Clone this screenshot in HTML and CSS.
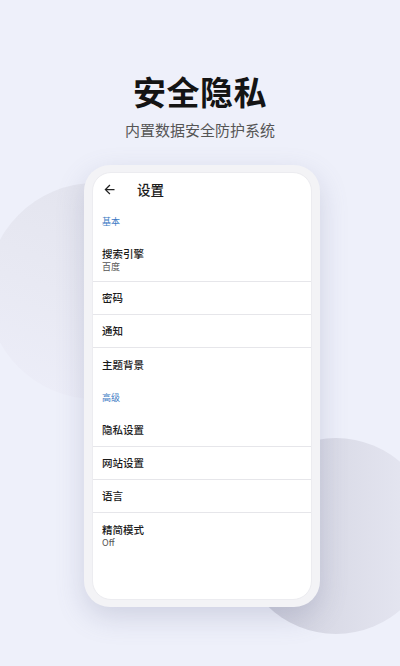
FILE: index.html
```html
<!DOCTYPE html>
<html lang="zh-CN">
<head>
  <meta charset="UTF-8">
  <meta name="viewport" content="width=device-width, initial-scale=1.0">
  <title>安全隐私</title>
  <link rel="stylesheet" href="styles.css">
</head>
<body>
  <div class="page">
    <h1 class="headline">安全隐私</h1>
    <p class="tagline">内置数据安全防护系统</p>

    <div class="phone">
      <div class="screen">
        <div class="app-bar">
          <svg class="back-icon" viewBox="0 0 24 24" width="15" height="15">
            <path d="M20 11H7.83l5.59-5.59L12 4l-8 8 8 8 1.41-1.41L7.83 13H20v-2z" fill="#222"/>
          </svg>
          <span class="app-title">设置</span>
        </div>

        <div class="settings">
          <div class="section-label">基本</div>
          <div class="row two-line">
            <span class="row-title">搜索引擎</span>
            <span class="row-sub">百度</span>
          </div>
          <div class="row"><span class="row-title">密码</span></div>
          <div class="row"><span class="row-title">通知</span></div>
          <div class="row last"><span class="row-title">主题背景</span></div>

          <div class="section-label">高级</div>
          <div class="row"><span class="row-title">隐私设置</span></div>
          <div class="row"><span class="row-title">网站设置</span></div>
          <div class="row"><span class="row-title">语言</span></div>
          <div class="row two-line last">
            <span class="row-title">精简模式</span>
            <span class="row-sub">Off</span>
          </div>
        </div>
      </div>
    </div>
  </div>
</body>
</html>
```

FILE: styles.css
```css
/* Reset */
* {
  margin: 0;
  padding: 0;
  box-sizing: border-box;
}

body {
  font-family: 'Noto Sans CJK SC', 'Noto Sans', sans-serif;
  background-color: #eef0fa;
  width: 400px;
  height: 666px;
  overflow: hidden;
}

/* Page with the two soft circles behind the phone */
.page {
  position: relative;
  height: 666px;
  display: flex;
  flex-direction: column;
  align-items: center;
  padding-top: 71px;
  overflow: hidden;
}

.page::before,
.page::after {
  content: '';
  position: absolute;
  border-radius: 50%;
  z-index: 0;
}

.page::before {
  left: -13px;
  top: 183px;
  width: 216px;
  height: 216px;
  background: linear-gradient(200deg, #e2e3ed 0%, #e8e9f3 55%, #edeef9 100%);
}

.page::after {
  left: 238px;
  top: 438px;
  width: 196px;
  height: 196px;
  background: linear-gradient(90deg, #c8c9d6 0%, #d9dae6 45%, #e8e9f4 100%);
}

/* Heading */
.headline {
  position: relative;
  z-index: 1;
  font-size: 33px;
  line-height: 40px;
  font-weight: 700;
  color: #141414;
  letter-spacing: 0.5px;
}

.tagline {
  position: relative;
  z-index: 1;
  margin-top: 9px;
  font-size: 15px;
  line-height: 20px;
  color: #555;
}

/* Phone frame */
.phone {
  position: relative;
  z-index: 1;
  margin-top: 25px;
  margin-left: 4px;
  width: 236px;
  height: 442px;
  padding: 7px 8px 7px 8px;
  background-color: #f3f3f6;
  border-radius: 26px;
  box-shadow: 0 10px 28px rgba(110, 112, 150, 0.24);
}

.screen {
  height: 100%;
  background-color: #fff;
  border-radius: 19px;
  border: 1px solid #ececf0;
  overflow: hidden;
}

/* App bar */
.app-bar {
  display: flex;
  align-items: center;
  height: 32px;
  padding-left: 9px;
}

.back-icon {
  display: block;
}

.app-title {
  margin-left: 20px;
  font-size: 13.5px;
  font-weight: 500;
  color: #1c1c1c;
}

/* Settings list */
.section-label {
  height: 33px;
  line-height: 33px;
  padding-left: 9px;
  font-size: 9px;
  color: #3b7ac4;
}

.row {
  display: flex;
  flex-direction: column;
  justify-content: center;
  height: 33px;
  padding-left: 9px;
  border-bottom: 1px solid #e6e6ea;
}

.row.last {
  border-bottom: none;
}

.row.two-line {
  height: 44px;
  justify-content: flex-start;
  padding-top: 9px;
}

.row.two-line.last {
  padding-top: 10px;
}

.row-title {
  font-size: 10.5px;
  line-height: 14px;
  font-weight: 500;
  color: #1a1a1a;
}

.row-sub {
  font-size: 9px;
  line-height: 12px;
  color: #555;
}
```
